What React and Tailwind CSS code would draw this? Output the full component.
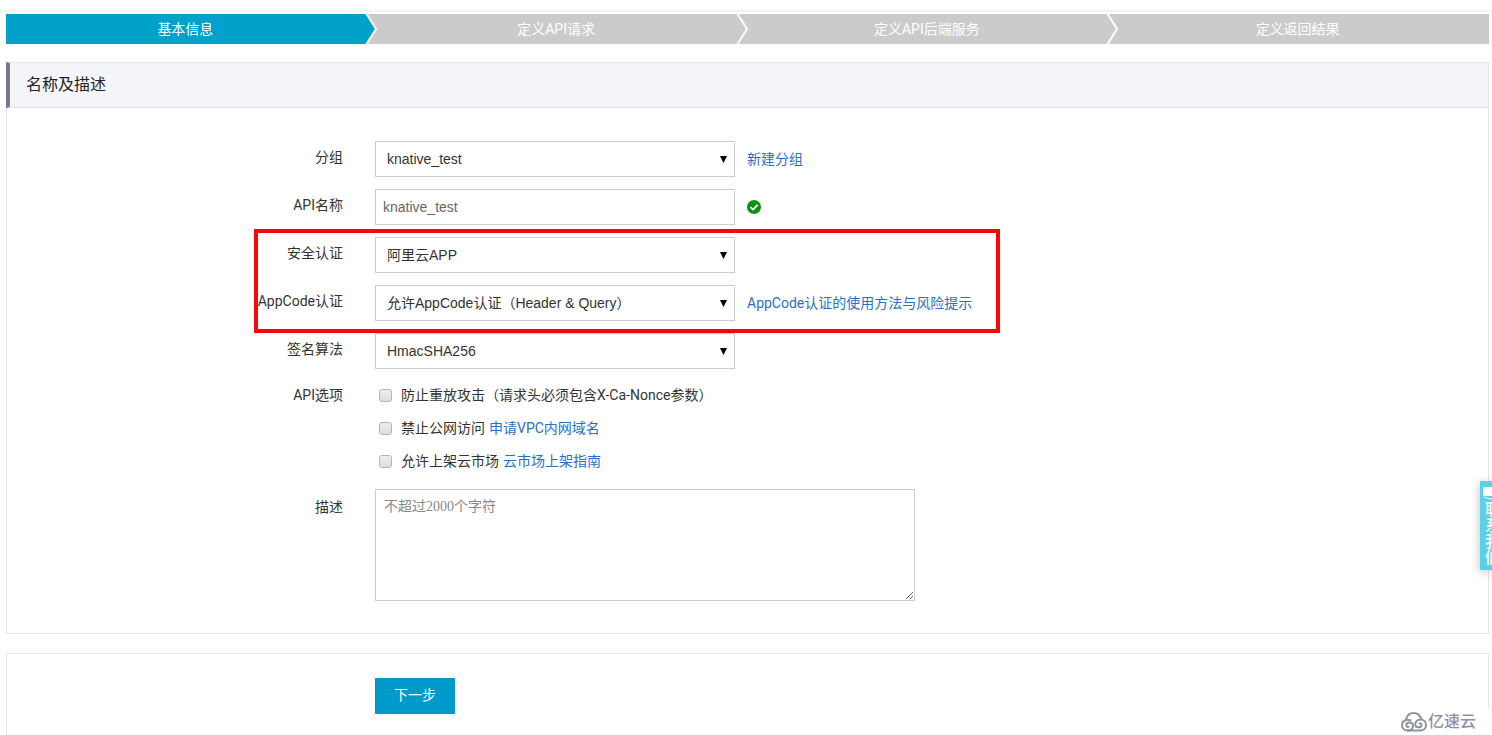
import { useState } from 'react';

const steps = ['基本信息', '定义API请求', '定义API后端服务', '定义返回结果'];

const options = [
  { id: 'nonce', label: '防止重放攻击（请求头必须包含X-Ca-Nonce参数）' },
  { id: 'intranet', label: '禁止公网访问', link: '申请VPC内网域名' },
  { id: 'market', label: '允许上架云市场', link: '云市场上架指南' },
];

function StepBar({ current }) {
  return (
    <ol className="flex h-[30px] bg-[#cbcbcb] text-sm text-white">
      {steps.map((step, i) => (
        <li
          key={step}
          className={`relative flex flex-1 items-center justify-center ${i === current ? 'bg-[#00a2ca]' : 'bg-[#cbcbcb]'}`}
        >
          <span className="pr-3">{step}</span>
          {i < steps.length - 1 && (
            <svg className="absolute top-0 -right-0.5 z-10" width="15" height="30" viewBox="0 0 15 30" fill="none">
              <path d="M3 0H15V30H3L12 15Z" fill="#cbcbcb" />
              <path d="M2 -1L12 15L2 31" stroke="#fff" strokeWidth="2" />
            </svg>
          )}
        </li>
      ))}
    </ol>
  );
}

function Row({ label, htmlFor, children }) {
  return (
    <div className="flex items-center">
      <label htmlFor={htmlFor} className="w-[368px] shrink-0 pr-8 pb-1 text-right">{label}</label>
      {children}
    </div>
  );
}

function Select({ id, value }) {
  return (
    <div className="relative w-[360px]">
      <select
        id={id}
        defaultValue={value}
        className="h-9 w-full appearance-none border border-[#ccc] bg-white px-[11px] font-['Liberation_Sans','Noto_Sans_CJK_SC',sans-serif] text-sm text-[#333]"
      >
        <option>{value}</option>
      </select>
      <svg className="pointer-events-none absolute top-[15px] right-2" width="7" height="7" viewBox="0 0 7 7">
        <path d="M0 0H7L3.5 7Z" fill="#000" />
      </svg>
    </div>
  );
}

function Link({ children, className = '' }) {
  return <a href="#" className={`text-[#2a6fc9] ${className}`}>{children}</a>;
}

export default function App() {
  const [name, setName] = useState('knative_test');
  const [desc, setDesc] = useState('');

  return (
    <div className="relative flex min-h-screen flex-col bg-white font-['Roboto','Noto_Sans_CJK_SC',sans-serif] text-sm text-[#333]">
      <div className="mt-[10px] h-[2px] shrink-0 bg-[#f3f3f3]" />

      <main className="flex flex-1 flex-col pt-[2px] pr-[3px] pl-[6px]">
        <StepBar current={0} />

        {/* 名称及描述 */}
        <section className="mt-[18px] border border-[#e8e8e8]">
          <h2 className="-mt-px -ml-px flex h-[46px] items-center border-y border-l-4 border-y-[#e3e4e9] border-l-[#777890] bg-[#f4f5f9] pl-4 text-base text-[#222]">
            名称及描述
          </h2>

          <form className="flex flex-col gap-3 pt-[33px] pb-8">
            <Row label="分组" htmlFor="group">
              <Select id="group" value="knative_test" />
              <Link className="ml-3">新建分组</Link>
            </Row>
            <Row label="API名称" htmlFor="name">
              <input
                id="name"
                value={name}
                onChange={(e) => setName(e.target.value)}
                className="h-9 w-[360px] border border-[#ccc] px-[7px] font-['Liberation_Sans',sans-serif] text-[#666]"
              />
              <svg className="ml-3" width="14" height="14" viewBox="0 0 14 14" fill="none">
                <circle cx="7" cy="7" r="7" fill="#0a9213" />
                <path d="M3.400 7.200L6 9.600L10.800 4.800" stroke="#fff" strokeWidth="1.800" />
              </svg>
            </Row>

            <div className="relative flex flex-col gap-3">
              <Row label="安全认证" htmlFor="auth">
                <Select id="auth" value="阿里云APP" />
              </Row>
              <Row label="AppCode认证" htmlFor="appcode">
                <Select id="appcode" value="允许AppCode认证（Header & Query）" />
                <Link className="ml-3">AppCode认证的使用方法与风险提示</Link>
              </Row>
              <div className="pointer-events-none absolute -top-2 -bottom-3 left-[247px] z-10 w-[746px] border-4 border-[#f90606]" />
            </div>

            <Row label="签名算法" htmlFor="sign">
              <Select id="sign" value="HmacSHA256" />
            </Row>

            <div className="flex items-start pt-1">
              <span className="w-[368px] shrink-0 pr-8 text-right">API选项</span>
              <div className="flex flex-col gap-[13px]">
                {options.map((item) => (
                  <div key={item.id} className="flex items-center pl-1">
                    <input
                      id={item.id}
                      type="checkbox"
                      className="size-[13px] appearance-none rounded-[3px] border border-[#b4b4b4] bg-linear-to-b from-[#eee] to-[#ddd]"
                    />
                    <label htmlFor={item.id} className="ml-[9px]">{item.label}</label>
                    {item.link && <Link className="ml-1">{item.link}</Link>}
                  </div>
                ))}
              </div>
            </div>

            <div className="flex items-start pt-1.5">
              <label htmlFor="desc" className="w-[368px] shrink-0 pt-2 pr-8 text-right">描述</label>
              <textarea
                id="desc"
                value={desc}
                onChange={(e) => setDesc(e.target.value)}
                placeholder="不超过2000个字符"
                className="h-28 w-[540px] border border-[#ccc] px-2 py-[7px] font-['Liberation_Serif','Noto_Sans_CJK_SC',serif] text-sm placeholder:text-[#888]"
              />
            </div>
          </form>
        </section>

        <section className="mt-[19px] flex-1 border border-b-0 border-[#e8e8e8] pt-6 pl-[368px]">
          <button type="button" className="h-9 w-20 bg-[#0099cc] pb-0.5 text-white">下一步</button>
        </section>
      </main>

      {/* 联系我们 */}
      <button
        type="button"
        className="absolute top-[481px] right-0 z-20 flex h-[89px] w-3 flex-col items-start overflow-hidden bg-[#5bd0e8] pt-[6px] pl-[3px] shadow-[0_2px_10px_rgba(0,0,0,0.25)]"
      >
        <svg className="shrink-0" width="18" height="14" viewBox="0 0 18 14">
          <path d="M2 0H16Q18 0 18 2V7Q18 9 16 9H2Q0 9 0 7V2Q0 0 2 0Z" fill="#fff" />
          <path d="M1 10Q9 14 17 10" stroke="#fff" fill="none" />
        </svg>
        <span className="text-base leading-4 font-medium whitespace-nowrap text-white [writing-mode:vertical-rl]">联系我们</span>
      </button>

      <div className="absolute right-0 bottom-0 z-10 flex h-[26px] items-center gap-px bg-white pr-4 pl-2 text-base font-medium text-[#8d93a0]">
        <svg width="26" height="20" viewBox="0 0 26 20" fill="none" stroke="#8d93a0" strokeWidth="2" strokeLinecap="round">
          <path d="M5 7.500C6 3.500 9 1 12.500 1C16 1 19 3 20 6.500" />
          <path d="M9.500 8.300C5 6.500 1 9.500 1 13.300C1 16.500 3.500 18.500 6.500 18.500C10 18.500 12 16.500 12 14C12 11.800 10.300 10.600 8.500 10.600C6.500 10.600 5.300 12 5.300 13.300C5.300 14.600 6.300 15.200 7.500 14.800" />
          <path d="M6.500 18.500H19C22.500 18.500 25 16.200 25 13C25 9.800 22.500 7.500 19.500 7.500C16.500 7.500 14.300 9.800 14.300 12C14.300 14 15.800 15.300 17.500 15.300C19.300 15.300 20.500 14.200 20.500 12.900C20.500 11.700 19.600 11.100 18.500 11.500" />
        </svg>
        <span>亿速云</span>
      </div>
    </div>
  );
}
